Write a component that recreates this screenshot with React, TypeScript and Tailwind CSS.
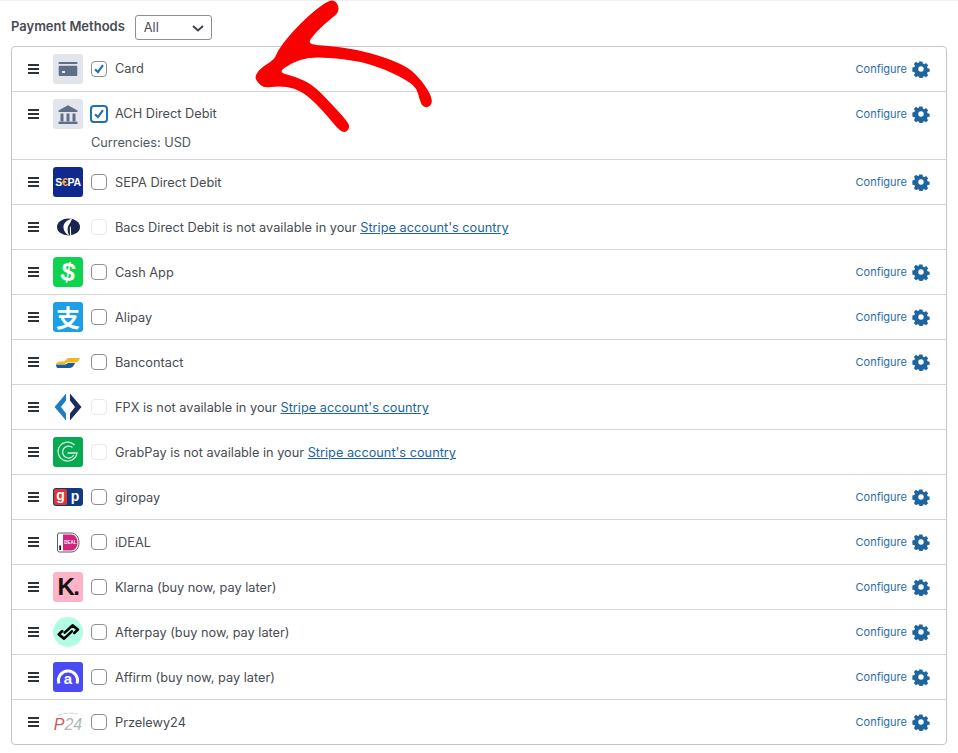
import { ReactNode } from "react";

const Burger = () => (
  <div className="flex flex-col gap-[2px] w-[11px] shrink-0">
    <span className="h-[2px] bg-[#2c3338]" />
    <span className="h-[2px] bg-[#2c3338]" />
    <span className="h-[2px] bg-[#2c3338]" />
  </div>
);

const Gear = () => (
  <svg viewBox="0 0 24 24" className="w-[18px] h-[18px] fill-[#1e659f]">
    <path
      fillRule="evenodd"
      d="M9.800 1h4.400l.6 3 2.100.9 2.600-1.700 3.100 3.100-1.700 2.600.9 2.100 3 .6v4.400l-3 .6-.9 2.100 1.700 2.600-3.100 3.100-2.600-1.700-2.100.9-.6 3H9.800l-.6-3-2.100-.9-2.600 1.700-3.100-3.100 1.700-2.600-.9-2.100-3-.6V9.800l3-.6.9-2.100-1.700-2.600 3.100-3.100 2.600 1.700 2.100-.9.6-3zM12 8a4 4 0 1 0 0 8 4 4 0 0 0 0-8z"
      transform="translate(1.200 1.200) scale(0.9)"
    />
  </svg>
);

const Check = ({ mode }: { mode: "on" | "focus" | "off" | "disabled" }) => {
  const box =
    mode === "focus"
      ? "w-[18px] h-[18px] -m-[1px] border-2 border-[#2271b1]"
      : mode === "disabled"
        ? "w-4 h-4 border border-[#e8e9ea]"
        : "w-4 h-4 border border-[#8c8f94]";
  return (
    <span className={`rounded-[4px] bg-white flex items-center justify-center shrink-0 ${box}`}>
      {mode === "on" || mode === "focus" ? (
        <svg viewBox="0 0 16 16" className="w-[14px] h-[14px] shrink-0 fill-none stroke-[#2271b1] stroke-[2.500]">
          <path d="M3.500 8.200 6.800 11.500 12.500 3.500" />
        </svg>
      ) : null}
    </span>
  );
};

const Tile = ({ className, children }: { className: string; children: ReactNode }) => (
  <div className={`w-[30px] h-[30px] flex items-center justify-center shrink-0 ${className}`}>{children}</div>
);

const logoFont = "font-['Liberation_Sans',sans-serif] font-bold text-white";

const icons: Record<string, ReactNode> = {
  card: (
    <Tile className="bg-[#e2e6ec] rounded-[3px]">
      <svg viewBox="0 0 30 30" className="w-[30px] h-[30px]">
        <rect x="5.700" y="8" width="18.600" height="2" fill="#5f6f85" />
        <rect x="5.700" y="11.700" width="18.600" height="10.300" rx="1" fill="#5f6f85" />
        <rect x="9" y="17" width="3" height="2" fill="#e2e6ec" />
      </svg>
    </Tile>
  ),
  bank: (
    <Tile className="bg-[#e2e6ec] rounded-[3px]">
      <svg viewBox="0 0 30 30" className="w-[30px] h-[30px] fill-[#5f6f85]">
        <path d="M15 6.300 24.500 11.500V13H5.500v-1.500z" />
        <rect x="7.500" y="14.500" width="3" height="8" />
        <rect x="13.500" y="14.500" width="3" height="8" />
        <rect x="19.500" y="14.500" width="3" height="8" />
        <rect x="5.500" y="22.700" width="19" height="2.300" />
      </svg>
    </Tile>
  ),
  sepa: (
    <Tile className="bg-[#10298e] rounded-[3px]">
      <span className={`${logoFont} text-[10.500px] leading-none tracking-[-0.3px]`}>
        S<span className="text-[#f5b323]">€</span>PA
      </span>
    </Tile>
  ),
  bacs: (
    <Tile className="bg-white">
      <svg viewBox="0 0 30 30" className="w-[30px] h-[30px]">
        <ellipse cx="15.500" cy="15" rx="11.500" ry="8.400" fill="#1c2550" />
        <path d="M19 6.800C14 8 10 11 10.500 16C11 19.500 13 22 16 23.400C14.500 20 14 16 15.500 13.500C16.500 12 17.500 11 19 6.800Z" fill="#fff" />
        <path d="M16.800 15 17 23.400l1.200-.1-.4-8.800z" fill="#fff" />
      </svg>
    </Tile>
  ),
  cash: (
    <Tile className="bg-[#0ed34e] rounded-[4px]">
      <span className={`${logoFont} text-[26px] leading-[30px] rotate-[10deg]`}>$</span>
    </Tile>
  ),
  alipay: (
    <Tile className="bg-[#1d9fe5] rounded-[3px]">
      <span className="font-['Noto_Sans_CJK_SC',sans-serif] font-bold text-white text-[24px] leading-[30px]">支</span>
    </Tile>
  ),
  bancontact: (
    <Tile className="bg-white">
      <svg viewBox="0 0 30 30" className="w-[30px] h-[30px]">
        <path d="M3 17c1-2 3-2.500 5-2.500h3L15 11h12c-1 3-3 4.500-5 4.500h-8L12 17z" fill="#f5b51c" />
        <path d="M3 17.500h9.500L15 16h7c-1 3-3 5-6 5H5c-1.500 0-2-2-2-3.500z" fill="#1c5c94" />
      </svg>
    </Tile>
  ),
  fpx: (
    <Tile className="bg-white">
      <svg viewBox="0 0 30 30" className="w-[30px] h-[30px]">
        <path d="M13 1.500v7L8 15l5 6.500v7L1.500 15z" fill="#1f7ec0" />
        <path d="M17 1.500v7L22 15l-5 6.500v7L28.500 15z" fill="#1c2a5e" />
      </svg>
    </Tile>
  ),
  grab: (
    <Tile className="bg-[#07a951] rounded-[3px]">
      <svg viewBox="0 0 30 30" className="w-[30px] h-[30px] fill-none stroke-[#d5f2e0] stroke-[1.300]">
        <path d="M21.500 8A9.500 9.500 0 1 0 24 16H14.500" />
        <path d="M19.500 10.500A6 6 0 1 0 20.800 18" />
      </svg>
    </Tile>
  ),
  giropay: (
    <div className="w-[30px] h-[18px] rounded-[3px] bg-[#0f3a7e] flex shrink-0 p-[1px] gap-[1px]">
      <span className={`${logoFont} w-[13px] h-[16px] bg-[#e3342f] rounded-[2px] text-[14px] leading-[13px] text-center`}>g</span>
      <span className={`${logoFont} flex-1 text-[14px] leading-[14px] text-center`}>p</span>
    </div>
  ),
  ideal: (
    <Tile className="bg-white">
      <svg viewBox="0 0 30 30" className="w-[30px] h-[30px]">
        <path d="M4.500 8a2 2 0 0 1 2-2H18c5 0 8 4 8 9.500S23 25 18 25H6.500a2 2 0 0 1-2-2z" fill="#fff" stroke="#333" strokeWidth="0.800" />
        <path d="M10 7.500h8c4 0 6.500 3.500 6.500 8s-2.500 8-6.500 8h-8z" fill="#d3257f" />
        <rect x="6.300" y="18.500" width="1.700" height="4.500" fill="#111" />
        <text x="17.300" y="17" textAnchor="middle" fontSize="4.500" fontWeight="700" fill="#fff" fontFamily="Liberation Sans">DEAL</text>
      </svg>
    </Tile>
  ),
  klarna: (
    <Tile className="bg-[#ffb3c7] rounded-[3px]">
      <span className="font-['Liberation_Sans',sans-serif] font-bold text-[#17120f] text-[24px] leading-[30px] tracking-[-1.500px]">K.</span>
    </Tile>
  ),
  afterpay: (
    <Tile className="bg-[#b2fce4] rounded-full">
      <svg viewBox="0 0 30 30" className="w-[30px] h-[30px] fill-none stroke-black stroke-[2.200]" strokeLinejoin="round" strokeLinecap="round">
        <g transform="translate(-4.500 -3) scale(1.2)">
          <path d="M13.500 15.500 20 9.500 24.500 13 21.500 15.800" />
          <path d="M19.500 14.500 13 20.500 8.500 17 11.500 14.200" />
        </g>
      </svg>
    </Tile>
  ),
  affirm: (
    <Tile className="bg-[#4a4af4] rounded-[3px]">
      <svg viewBox="0 0 30 30" className="w-[30px] h-[30px]">
        <path d="M6 21.500A9.500 9.500 0 1 1 24 21.500" fill="none" stroke="#fff" strokeWidth="3" />
        <text x="15" y="21.500" textAnchor="middle" fontSize="15" fontWeight="700" fill="#fff" fontFamily="Liberation Sans">a</text>
      </svg>
    </Tile>
  ),
  p24: (
    <Tile className="bg-white">
      <span className="flex flex-col items-center font-['Liberation_Sans',sans-serif] text-[16px] leading-none italic">
        <svg viewBox="0 0 30 6" className="w-[26px] h-[6px] fill-none stroke-[#a9a9a9] stroke-[0.700]">
          <path d="M3 5C9 2 16 1 26 3" strokeDasharray="5 2" />
        </svg>
        <span>
          <span className="text-[#d0555c]">P</span>
          <span className="text-[#b5b5b5]">24</span>
        </span>
      </span>
    </Tile>
  ),
};

type Method = {
  icon: string;
  label: string;
  check?: "on" | "focus" | "off";
  note?: string;
  unavailable?: boolean;
};

const methods: Method[] = [
  { icon: "card", label: "Card", check: "on" },
  { icon: "bank", label: "ACH Direct Debit", check: "focus", note: "Currencies: USD" },
  { icon: "sepa", label: "SEPA Direct Debit" },
  { icon: "bacs", label: "Bacs Direct Debit", unavailable: true },
  { icon: "cash", label: "Cash App" },
  { icon: "alipay", label: "Alipay" },
  { icon: "bancontact", label: "Bancontact" },
  { icon: "fpx", label: "FPX", unavailable: true },
  { icon: "grab", label: "GrabPay", unavailable: true },
  { icon: "giropay", label: "giropay" },
  { icon: "ideal", label: "iDEAL" },
  { icon: "klarna", label: "Klarna (buy now, pay later)" },
  { icon: "afterpay", label: "Afterpay (buy now, pay later)" },
  { icon: "affirm", label: "Affirm (buy now, pay later)" },
  { icon: "p24", label: "Przelewy24" },
];

function Row({ m }: { m: Method }) {
  return (
    <div className="border-b border-[#d3d5d8] last:border-b-0 px-[16px] py-[7px]">
      <div className="flex items-center h-[30px]">
        <Burger />
        <div className="w-[30px] ml-[14px] flex justify-center shrink-0">{icons[m.icon]}</div>
        <div className="ml-[8px]">
          <Check mode={m.unavailable ? "disabled" : m.check ?? "off"} />
        </div>
        <div className={`ml-[8px] flex-1 ${m.check ? "" : "pt-[2px]"}`}>
          {m.label}
          {m.unavailable ? (
            <>
              {" is not available in your "}
              <span className="text-[#1e659f] underline">Stripe account's country</span>
            </>
          ) : null}
        </div>
        {m.unavailable ? null : (
          <div className="flex items-center gap-[5px]">
            <span className="text-[11px] text-[#2b6ea6]">Configure</span>
            <Gear />
          </div>
        )}
      </div>
      {m.note ? <div className="ml-[63px] mt-[5px] mb-[1px] h-[17px] leading-[17px] text-[#50575e]">{m.note}</div> : null}
    </div>
  );
}

// outline of the hand-drawn arrow, traced from the picture
const arrowPoints = [
  [258, 0], [275, 10], [280, 35], [255, 55], [215, 90], [180, 135], [250, 140], [330, 150], [420, 175],
  [490, 205], [530, 245], [560, 295], [555, 318], [535, 320], [525, 295], [518, 265], [490, 240], [420, 205],
  [340, 180], [250, 170], [190, 170], [140, 185], [95, 218], [150, 232], [200, 255], [250, 305], [300, 360],
  [313, 380], [300, 397], [280, 385], [240, 335], [190, 285], [150, 262], [100, 255], [60, 262], [38, 245],
  [32, 228], [50, 205], [90, 180], [100, 155], [125, 120], [170, 70], [215, 30],
];

// closed curve through the midpoints, so the outline has no corners
function smooth(points: number[][]) {
  const mid = (a: number[], b: number[]) => `${(a[0] + b[0]) / 2} ${(a[1] + b[1]) / 2}`;
  const last = points[points.length - 1];
  let d = `M${mid(last, points[0])}`;
  points.forEach((p, i) => {
    d += ` Q${p[0]} ${p[1]} ${mid(p, points[(i + 1) % points.length])}`;
  });
  return d + "Z";
}

export default function App() {
  return (
    <div className="relative h-[753px] bg-white font-['Inter',sans-serif] text-[12.750px] text-[#474c52] overflow-hidden">
      <div className="h-[1px] bg-[#f0f0f1]" />
      <div className="flex items-center gap-[10px] pl-[11px] pt-[8px] h-[45px]">
        <span className="font-semibold text-[13px] -mt-[2px]">Payment Methods</span>
        <div className="w-[77px] h-[25px] border border-[#8c8f94] rounded-[3px] flex items-center justify-between pl-[8px] pr-[5px]">
          <span>All</span>
          <svg viewBox="0 0 16 16" className="w-4 h-4 fill-none stroke-[#3c434a] stroke-2">
            <path d="M3 6l5 4.500L13 6" />
          </svg>
        </div>
      </div>
      <div className="mx-[11px] border border-[#c3c4c7] rounded-[4px]">
        {methods.map((m) => (
          <Row key={m.icon} m={m} />
        ))}
      </div>

      {/* red arrow lying over the list */}
      <svg viewBox="0 0 585 420" className="absolute left-[245px] top-0 w-[195px] h-[140px] pointer-events-none">
        <path d={smooth(arrowPoints)} fill="#fb0000" stroke="#fb0000" strokeWidth="5" strokeLinejoin="round" />
      </svg>
    </div>
  );
}
